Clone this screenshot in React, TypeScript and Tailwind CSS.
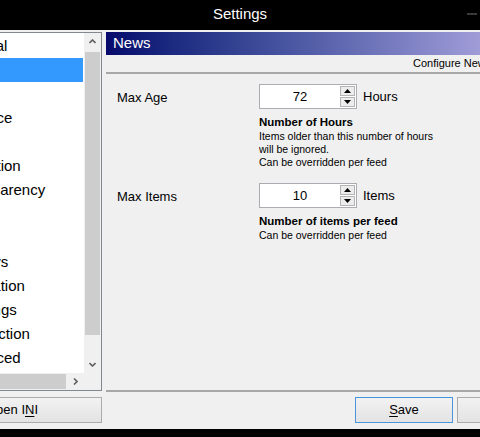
import React from "react";

// Settings dialog, cropped: page list on the left, "News" page on the right.
const pages = [
  "General",
  "News",
  "Feeds",
  "Interface",
  "Fonts",
  "Animation",
  "Transparency",
  "Sound",
  "Proxy",
  "Hotkeys",
  "Navigation",
  "Warnings",
  "Connection",
  "Advanced",
];

function Triangle({ down }: { down?: boolean }) {
  return (
    <svg width="7" height="4" viewBox="0 0 7 4">
      <path d={down ? "M0 0H7L3.5 4z" : "M3.5 0L7 4H0z"} fill="#000" />
    </svg>
  );
}

function SpinBox({ value }: { value: string }) {
  return (
    <div className="flex h-[25px] w-[98px] shrink-0 border border-[#abadb3] bg-white">
      <div className="flex flex-1 items-center justify-center pt-[1px] text-[13px] text-black">
        {value}
      </div>
      <div className="flex w-[16px] flex-col gap-[1px] py-[1px] pr-[1px]">
        <div className="flex flex-1 items-center justify-center border border-[#b4b4b4] bg-[#ececec]">
          <Triangle />
        </div>
        <div className="flex flex-1 items-center justify-center border border-[#b4b4b4] bg-[#ececec]">
          <Triangle down />
        </div>
      </div>
    </div>
  );
}

function Chevron({ dir }: { dir: "up" | "down" | "right" }) {
  const d =
    dir === "up" ? "M0.5 4L3.5 1L6.5 4" : dir === "down" ? "M0.5 1L3.5 4L6.5 1" : "M1 0.5L4 3.5L1 6.5";
  const w = dir === "right" ? 5 : 7;
  const h = dir === "right" ? 7 : 5;
  return (
    <svg width={w} height={h} viewBox={`0 0 ${w} ${h}`}>
      <path d={d} fill="none" stroke="#606060" strokeWidth="1.6" />
    </svg>
  );
}

function Field({
  label,
  value,
  unit,
  title,
  lines,
}: {
  label: string;
  value: string;
  unit: string;
  title: string;
  lines: string[];
}) {
  return (
    <div className="flex">
      <div className="flex h-[25px] w-[153px] shrink-0 items-center pl-[11px] pt-[2px] text-[13px] text-black">
        {label}
      </div>
      <div className="flex flex-col">
        <div className="flex items-center">
          <SpinBox value={value} />
          <span className="ml-[6px] text-[13px] text-black">{unit}</span>
        </div>
        <div className="mt-[6px] text-[11.5px] font-bold leading-[14px] text-black">{title}</div>
        <div className="pt-[1px] text-[10.5px] leading-[13px] text-black">
          {lines.map((l) => (
            <div key={l}>{l}</div>
          ))}
        </div>
      </div>
    </div>
  );
}

export default function App() {
  return (
    <div className="flex h-[437px] w-[480px] flex-col overflow-hidden bg-black font-['Liberation_Sans',Arial,sans-serif]">
      <div className="relative flex h-[30px] shrink-0 items-center justify-center pb-[1px] text-[15px] text-white">
        Settings
        <span className="absolute right-[3px] top-[13px] h-[2px] w-[10px] bg-[#3a3a3a]" />
      </div>

      <div className="flex h-[399px] shrink-0 bg-[#f0f0f0] pt-[2px]">
        {/* left: page list */}
        <div className="-ml-[78px] flex w-[180px] shrink-0 flex-col">
          <div className="flex h-[359px] flex-col border border-[#828790] bg-white">
            <div className="flex min-h-0 flex-1">
              <div className="flex min-w-0 flex-1 flex-col overflow-hidden pr-[1px] pt-[1px]">
                {pages.map((p) => (
                  <div
                    key={p}
                    className={`h-[24px] shrink-0 whitespace-nowrap pl-[31px] text-[15px] leading-[24px] ${
                      p === "News" ? "bg-[#3399ff] text-white" : "text-black"
                    }`}
                  >
                    {p}
                  </div>
                ))}
              </div>
              <div className="flex w-[17px] shrink-0 flex-col bg-[#f0f0f0]">
                <div className="flex h-[19px] items-center justify-center pb-[3px]">
                  <Chevron dir="up" />
                </div>
                <div className="mx-[1px] h-[283px] bg-[#cdcdcd]" />
                <div className="flex-1" />
                <div className="flex h-[17px] items-center justify-center">
                  <Chevron dir="down" />
                </div>
              </div>
            </div>
            <div className="flex h-[17px] shrink-0 bg-[#f0f0f0]">
              <div className="w-[17px]" />
              <div className="my-[1px] mx-[1px] flex-1 bg-[#cdcdcd]" />
              <div className="flex w-[17px] items-center justify-center">
                <Chevron dir="right" />
              </div>
              <div className="w-[17px] bg-[#f0f0f0]" />
            </div>
          </div>
          <button className="mt-[6px] flex h-[26px] items-center justify-center border border-[#acacac] bg-linear-to-b from-[#f2f2f2] to-[#e3e3e3] text-[13px] text-black">
            Open I<span className="underline underline-offset-2">N</span>I
          </button>
        </div>

        {/* right: News page */}
        <div className="ml-[4px] flex min-w-0 flex-1 flex-col">
          <div className="flex h-[23px] shrink-0 items-center bg-linear-to-r from-[#08086c] to-[#a09cd8] pl-[7px] text-[15px] text-white">
            News
          </div>
          <div className="flex h-[17px] shrink-0 items-center whitespace-nowrap pl-[307px] text-[11px] text-black">
            Configure News settings
          </div>
          <div className="h-[2px] shrink-0 bg-[#a8a8a8]" />

          <div className="mt-[10px] flex flex-col gap-[14px]">
            <Field
              label="Max Age"
              value="72"
              unit="Hours"
              title="Number of Hours"
              lines={["Items older than this number of hours", "will be ignored.", "Can be overridden per feed"]}
            />
            <Field
              label="Max Items"
              value="10"
              unit="Items"
              title="Number of items per feed"
              lines={["Can be overridden per feed"]}
            />
          </div>

          <div className="flex-1" />
          <div className="h-[2px] shrink-0 bg-[#a8a8a8]" />
          <div className="mb-[6px] mt-[5px] flex shrink-0 gap-[4px] pl-[249px]">
            <button className="flex h-[26px] w-[98px] shrink-0 items-center justify-center border border-[#4a94dc] bg-linear-to-b from-[#f2f2f2] to-[#e3e3e3] text-[13px] text-black">
              <span>
                <span className="underline underline-offset-2">S</span>ave
              </span>
            </button>
            <button className="flex h-[26px] w-[98px] shrink-0 items-center justify-center border border-[#acacac] bg-linear-to-b from-[#f2f2f2] to-[#e3e3e3] text-[13px] text-black">
              Cancel
            </button>
          </div>
        </div>
      </div>
    </div>
  );
}
